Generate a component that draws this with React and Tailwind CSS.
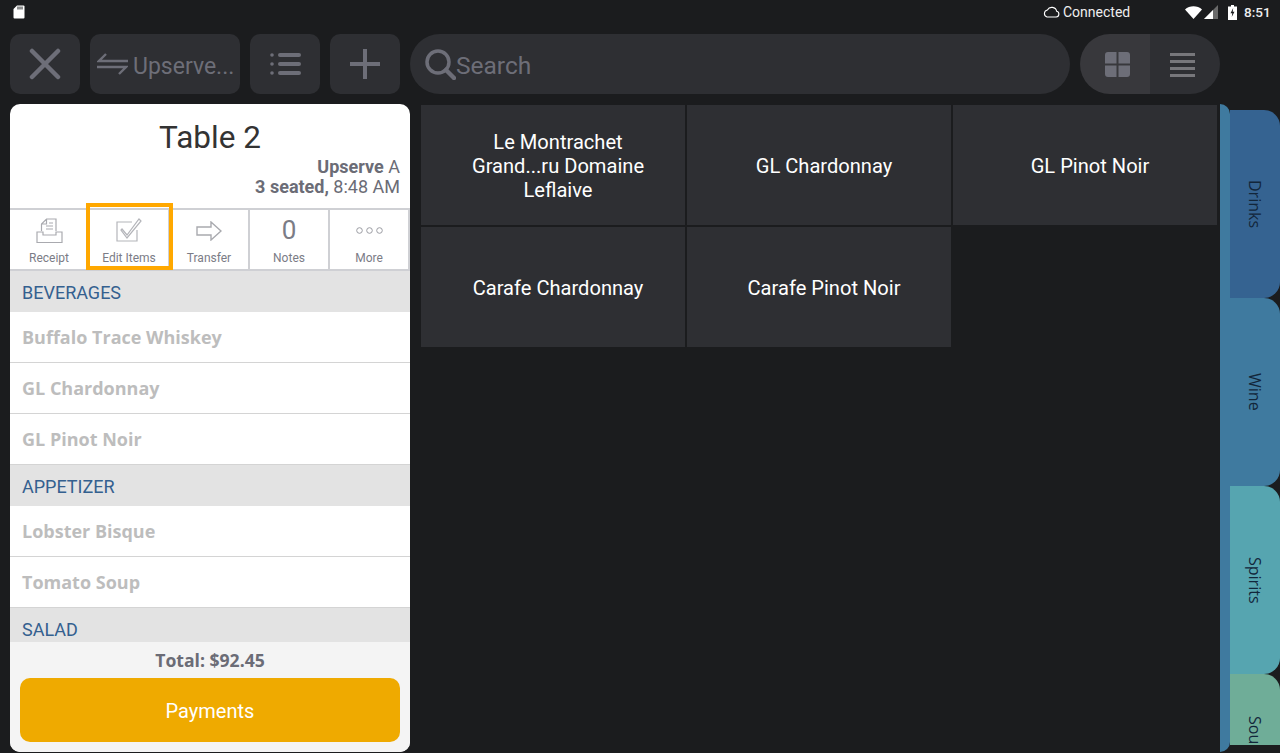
import React from 'react'

const roboto = "font-['Roboto',sans-serif]"
const openSans = "font-['Open_Sans',sans-serif]"

function SdIcon() {
  return (
    <svg width="12" height="14" viewBox="0 0 12 14">
      <path d="M4 0.5h6.5a1 1 0 0 1 1 1v11a1 1 0 0 1-1 1h-9a1 1 0 0 1-1-1V4z" fill="#fff" />
      <path d="M5 1.5v3M7 1.5v3M9 1.5v3" stroke="#1b1c1e" strokeWidth="1" />
    </svg>
  )
}

function StatusBar() {
  return (
    <div className={`h-[24px] flex items-center justify-between pl-[13px] pr-[9px] text-[14px] text-[#eeeeee] ${roboto}`}>
      <SdIcon />
      <div className="flex items-center">
        <svg width="17" height="12" viewBox="0 0 17 12" fill="none" stroke="#fff" strokeWidth="1.1">
          <path d="M4 11h9.2a2.900 2.900 0 0 0 .5-5.700A5 5 0 0 0 4.400 4 3.600 3.600 0 0 0 4 11z" />
        </svg>
        <span className="ml-[3px] text-[14px] w-[67px] whitespace-nowrap">Connected</span>
        <svg className="ml-[55px]" width="17" height="13" viewBox="0 0 17 13"><path d="M0 3.500C4.500-.8 12.500-.8 17 3.500L8.500 13z" fill="#fff" /></svg>
        <svg className="ml-[2px]" width="14" height="14" viewBox="0 0 14 14">
          <path d="M14 0v14H0z" fill="#6a6a6a" />
          <path d="M9 5v9H0z" fill="#fff" />
        </svg>
        <svg className="ml-[10px]" width="9" height="15" viewBox="0 0 9 15">
          <path d="M3 0h3v1.500h3V15H0V1.500h3z" fill="#fff" />
          <path d="M5.200 3 2.500 8.300h1.800L3.700 12l2.800-5.300H4.700z" fill="#1b1c1e" />
        </svg>
        <span className="ml-[7px] w-[27px] font-medium text-[13.500px] whitespace-nowrap">8:51</span>
      </div>
    </div>
  )
}

function TopBar() {
  return (
    <div className="mt-[10px] h-[60px] flex gap-[10px] pl-[10px]">
      <button className="w-[70px] rounded-[10px] bg-[#2e2f33] flex items-center justify-center">
        <svg width="32" height="32" viewBox="0 0 32 32" stroke="#6d6e78" strokeWidth="4.500" strokeLinecap="round">
          <path d="M3 3l26 26M29 3L3 29" />
        </svg>
      </button>
      <button className={`w-[150px] rounded-[10px] bg-[#2e2f33] flex items-center pl-[7px] text-[23px] text-[#6d6e78] whitespace-nowrap overflow-hidden ${roboto}`}>
        <svg width="31" height="22" viewBox="0 0 31 22" fill="none" stroke="#6d6e78" strokeWidth="2.400">
          <path d="M9 1L2 8h29M0 14h29l-7 7" />
        </svg>
        <span className="ml-[5px] pt-[6px]">Upserve...</span>
      </button>
      <button className="w-[70px] rounded-[10px] bg-[#2e2f33] flex items-center justify-center">
        <svg width="31" height="24" viewBox="0 0 31 24" fill="#6d6e78">
          <circle cx="2" cy="3" r="1.800" /><circle cx="2" cy="12" r="1.800" /><circle cx="2" cy="21" r="1.800" />
          <rect x="8" y="1" width="23" height="4" rx="2" /><rect x="8" y="10" width="23" height="4" rx="2" /><rect x="8" y="19" width="23" height="4" rx="2" />
        </svg>
      </button>
      <button className="w-[70px] rounded-[10px] bg-[#2e2f33] flex items-center justify-center">
        <svg width="30" height="30" viewBox="0 0 30 30" fill="#6d6e78">
          <rect x="13" y="0" width="4" height="30" /><rect x="0" y="13" width="30" height="4" />
        </svg>
      </button>
      <div className={`w-[660px] rounded-[30px] bg-[#2e2f33] flex items-center pl-[15px] text-[24.500px] text-[#6d6e78] ${roboto}`}>
        <svg width="31" height="31" viewBox="0 0 31 31" fill="none" stroke="#6d6e78" strokeWidth="3.500" strokeLinecap="round">
          <circle cx="13" cy="13" r="11" /><path d="M21 21l8 8" strokeWidth="4.500" />
        </svg>
        <span className="pt-[5px]">Search</span>
      </div>
      <div className="w-[140px] rounded-[30px] overflow-hidden flex">
        <div className="w-[70px] bg-[#38383c] flex items-center justify-center pl-[5px] pt-[1px]">
          <svg width="25" height="25" viewBox="0 0 25 25" fill="#6d6e78">
            <path d="M3 0h8.500v11.500H0V3a3 3 0 0 1 3-3zM13.500 0H22a3 3 0 0 1 3 3v8.500H13.500zM0 13.500h11.500V25H3a3 3 0 0 1-3-3zM13.500 13.500H25V22a3 3 0 0 1-3 3h-8.500z" />
          </svg>
        </div>
        <div className="w-[70px] bg-[#2e2f33] flex items-center justify-center pr-[5px] pt-[1px]">
          <svg width="25" height="24" viewBox="0 0 25 24" fill="#77777b">
            <rect y="0" width="25" height="3" /><rect y="7" width="25" height="3" /><rect y="14" width="25" height="3" /><rect y="21" width="25" height="3" />
          </svg>
        </div>
      </div>
    </div>
  )
}

function ActionCell({ label, children }) {
  return (
    <div className="w-[80px] h-full flex flex-col items-center border-r-2 border-[#cfd0d4]">
      <div className="h-[41px] flex items-center justify-center">{children}</div>
      <span className="text-[12px] leading-[14px] text-[#7b7c86]">{label}</span>
    </div>
  )
}

function ActionRow() {
  return (
    <div className={`relative h-[63px] flex shrink-0 border-y-2 border-[#cfd0d4] ${roboto}`}>
      <ActionCell label="Receipt">
        <svg width="27" height="26" viewBox="0 0 27 26" fill="none" stroke="#a9aaaf" strokeWidth="1.200">
          <path d="M5.500 13V6l5-5h9.500v12M10.500 1v5h-5M1 14v10.500h25V14H20v3H7v-3zM10 8h7M10 11h7M13 5h4" />
        </svg>
      </ActionCell>
      <ActionCell label="Edit Items">
        <svg width="26" height="25" viewBox="0 0 26 25" fill="none" stroke="#b4b5ba" strokeWidth="1.200">
          <path d="M21 12v11H1V4h15" />
          <path d="M6 11l5 6L23 1l2 2-14 17-6-8z" />
        </svg>
      </ActionCell>
      <ActionCell label="Transfer">
        <svg width="26" height="20" viewBox="0 0 26 20" fill="none" stroke="#a9aaaf" strokeWidth="1.400">
          <path d="M1 6h14V1l10 9-10 9v-5H1z" />
        </svg>
      </ActionCell>
      <ActionCell label="Notes">
        <span className="text-[26px] text-[#7b7c86]">0</span>
      </ActionCell>
      <ActionCell label="More">
        <svg width="27" height="7" viewBox="0 0 27 7" fill="none" stroke="#9a9ba2" strokeWidth="1">
          <circle cx="3.500" cy="3.500" r="2.800" /><circle cx="13.500" cy="3.500" r="2.800" /><circle cx="23.500" cy="3.500" r="2.800" />
        </svg>
      </ActionCell>
      <div className="absolute left-[76px] top-[-7px] w-[87px] h-[67px] border-[4px] border-[#ffa800]" />
    </div>
  )
}

function SectionHead({ children }) {
  return (
    <div className={`h-[41px] shrink-0 bg-[#e3e3e3] pl-[12px] pt-[11px] text-[18px] leading-[21px] text-[#34608f] ${roboto}`}>{children}</div>
  )
}

function Item({ children }) {
  return (
    <div className={`h-[51px] shrink-0 bg-white flex items-center pl-[12px] text-[18px] font-bold text-[#bdbdbd] border-b border-[#d4d4d4] ${openSans}`}>{children}</div>
  )
}

function LeftPanel() {
  return (
    <div className="w-[400px] h-[648px] bg-white rounded-[10px] overflow-hidden flex flex-col">
      <div className={`h-[104px] shrink-0 pt-[13px] px-[10px] ${roboto}`}>
        <div className="text-center text-[31.500px] leading-[42px] text-[#333333]">Table 2</div>
        <div className="mt-[-2px] text-right text-[18px] leading-[20px] text-[#6b6c76]">
          <div><span className="font-bold">Upserve</span> A</div>
          <div><span className="font-bold">3 seated,</span> 8:48 AM</div>
        </div>
      </div>
      <ActionRow />
      <div className="flex-1 overflow-hidden flex flex-col">
        <SectionHead>BEVERAGES</SectionHead>
        <Item>Buffalo Trace Whiskey</Item>
        <Item>GL Chardonnay</Item>
        <Item>GL Pinot Noir</Item>
        <SectionHead>APPETIZER</SectionHead>
        <Item>Lobster Bisque</Item>
        <Item>Tomato Soup</Item>
        <SectionHead>SALAD</SectionHead>
      </div>
      <div className="h-[110px] shrink-0 bg-[#f4f4f4] px-[10px] flex flex-col">
        <div className={`h-[36px] flex items-center justify-center text-[17.600px] font-bold text-[#6b6c76] ${openSans}`}>Total: $92.45</div>
        <button className={`h-[64px] pt-[2px] rounded-[10px] bg-[#efaa00] text-white text-[20px] ${roboto}`}>Payments</button>
      </div>
    </div>
  )
}

function MenuTile({ children }) {
  return (
    <div className={`h-[120px] bg-[#2e2f33] flex items-center justify-center text-center text-[20.100px] leading-[24px] text-white pl-[50px] pr-[40px] pt-[2px] ${roboto}`}>{children}</div>
  )
}

function MenuGrid() {
  return (
    <div className="w-[797px] ml-[11px] mt-[1px] grid grid-cols-[264px_264px_264px] gap-[2px] content-start">
      <MenuTile>Le Montrachet Grand...ru Domaine Leflaive</MenuTile>
      <MenuTile>GL Chardonnay</MenuTile>
      <MenuTile>GL Pinot Noir</MenuTile>
      <MenuTile>Carafe Chardonnay</MenuTile>
      <MenuTile>Carafe Pinot Noir</MenuTile>
    </div>
  )
}

function Tab({ label, color, h = 'h-[188px]' }) {
  return (
    <div className={`${h} shrink-0 w-[50px] rounded-r-[16px] flex items-center justify-center ${color}`}>
      <span className={`[writing-mode:vertical-rl] text-[16px] text-[#12263a] ${openSans}`}>{label}</span>
    </div>
  )
}

function SideTabs() {
  return (
    <div className="ml-[2px] w-[60px] flex h-[648px]">
      <div className="w-[10px] bg-[#3f7a9f] rounded-tr-[10px] rounded-br-[10px]" />
      <div className="w-[50px] mt-[6px] h-[635px] overflow-hidden flex flex-col bg-[#1b1c1e]">
        <Tab label="Drinks" color="bg-[#356391]" />
        <Tab label="Wine" color="bg-[#3f7a9f]" />
        <Tab label="Spirits" color="bg-[#56a5b0]" />
        <Tab label="Soup" color="bg-[#6fad98]" h="h-[121px]" />
      </div>
    </div>
  )
}

export default function App() {
  return (
    <div className="w-[1280px] h-[753px] bg-[#1b1c1e] overflow-hidden">
      <StatusBar />
      <TopBar />
      <div className="mt-[10px] pl-[10px] flex">
        <LeftPanel />
        <MenuGrid />
        <SideTabs />
      </div>
    </div>
  )
}
